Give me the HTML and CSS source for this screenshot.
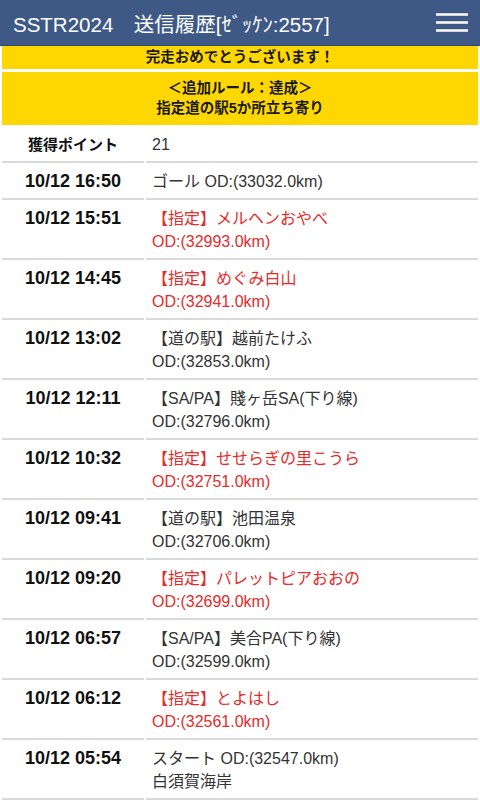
FILE: index.html
```html
<!DOCTYPE html>
<html lang="ja">
<head>
  <meta charset="UTF-8">
  <meta name="viewport" content="width=device-width, initial-scale=1.0">
  <title>SSTR2024 送信履歴</title>
  <link rel="stylesheet" href="styles.css">
</head>
<body>
  <header class="topbar">
    <h1 class="title">SSTR2024　送信履歴[ｾﾞｯｹﾝ:2557]</h1>
    <button class="menu-btn" aria-label="menu">
      <svg width="32" height="20" viewBox="0 0 32 20">
        <path d="M0 1.5H32M0 9.5H32M0 17.5H32" stroke="#fff" stroke-width="2.5"/>
      </svg>
    </button>
  </header>

  <div class="notice notice-single">完走おめでとうございます！</div>
  <div class="notice">＜追加ルール：達成＞<br>指定道の駅5か所立ち寄り</div>

  <table class="history">
    <tr>
      <th>獲得ポイント</th>
      <td>21</td>
    </tr>
    <tr>
      <th class="time">10/12 16:50</th>
      <td>ゴール OD:(33032.0km)</td>
    </tr>
    <tr>
      <th class="time">10/12 15:51</th>
      <td class="designated">【指定】メルヘンおやべ<br>OD:(32993.0km)</td>
    </tr>
    <tr>
      <th class="time">10/12 14:45</th>
      <td class="designated">【指定】めぐみ白山<br>OD:(32941.0km)</td>
    </tr>
    <tr>
      <th class="time">10/12 13:02</th>
      <td>【道の駅】越前たけふ<br>OD:(32853.0km)</td>
    </tr>
    <tr>
      <th class="time">10/12 12:11</th>
      <td>【SA/PA】賤ヶ岳SA(下り線)<br>OD:(32796.0km)</td>
    </tr>
    <tr>
      <th class="time">10/12 10:32</th>
      <td class="designated">【指定】せせらぎの里こうら<br>OD:(32751.0km)</td>
    </tr>
    <tr>
      <th class="time">10/12 09:41</th>
      <td>【道の駅】池田温泉<br>OD:(32706.0km)</td>
    </tr>
    <tr>
      <th class="time">10/12 09:20</th>
      <td class="designated">【指定】パレットピアおおの<br>OD:(32699.0km)</td>
    </tr>
    <tr>
      <th class="time">10/12 06:57</th>
      <td>【SA/PA】美合PA(下り線)<br>OD:(32599.0km)</td>
    </tr>
    <tr>
      <th class="time">10/12 06:12</th>
      <td class="designated">【指定】とよはし<br>OD:(32561.0km)</td>
    </tr>
    <tr>
      <th class="time">10/12 05:54</th>
      <td>スタート OD:(32547.0km)<br>白須賀海岸</td>
    </tr>
  </table>
</body>
</html>
```

FILE: styles.css
```css
body {
  font-family: "Liberation Sans", "Noto Sans CJK JP", sans-serif;
  background-color: #fff;
  color: #333;
  margin: 0;
  padding: 0;
}
.topbar {
  display: flex;
  align-items: center;
  justify-content: space-between;
  height: 46px;
  padding: 0 12px 0 13px;
  background-color: #3e5985;
  border-bottom: 1px solid #34496c;
  box-sizing: border-box;
}
.title {
  margin: 0;
  color: #fff;
  font-size: 20.5px;
  font-weight: normal;
}
.menu-btn {
  background: none;
  border: none;
  padding: 0;
  display: flex;
  cursor: pointer;
}
.notice {
  margin: 0 2px 3px;
  padding: 6px 0 7px;
  background-color: #ffd700;
  color: #1a1a1a;
  text-align: center;
  font-size: 14.5px;
  font-weight: bold;
  line-height: 20px;
}
.notice-single {
  padding: 0;
  line-height: 23px;
}
.history {
  width: 100%;
  border-collapse: separate;
  border-spacing: 2px 0;
  margin-top: -2px;
}
.history th,
.history td {
  padding: 7px 6px 5px;
  line-height: 23px;
  vertical-align: top;
  border-bottom: 2px solid #d9d9d9;
}
.history th {
  width: 130px;
  text-align: center;
  color: #111;
  font-size: 15px;
}
.history th.time {
  font-size: 18px;
}
.history td {
  text-align: left;
  font-size: 16px;
}
.history td.designated {
  color: #e62b2b;
}
```
